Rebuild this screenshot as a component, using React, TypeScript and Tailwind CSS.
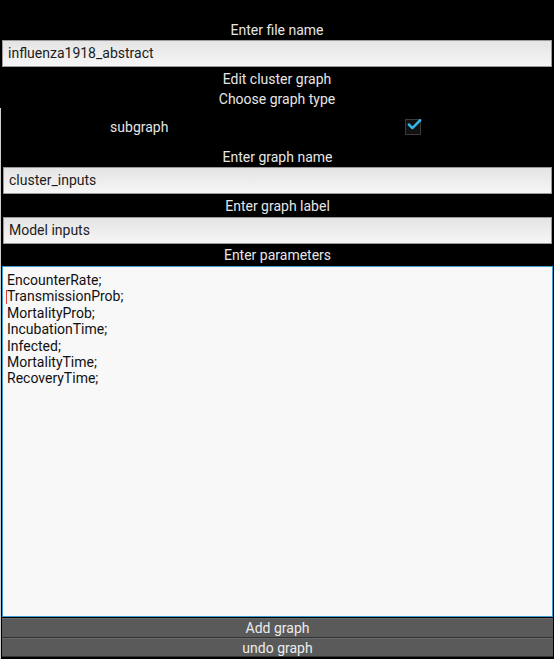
import { Check } from "lucide-react";

function Label({ text, h = "h-[20px]" }: { text: string; h?: string }) {
  return (
    <div className={`${h} flex items-center justify-center text-[14px] text-[#e6e6e6] leading-none`}>
      {text}
    </div>
  );
}

function Field({ value }: { value: string }) {
  return (
    <div className="mx-[2px] h-[27px] flex items-center px-[5px] border border-[#9a9a9a] bg-gradient-to-b from-[#e4e4e4] to-[#f6f6f6] text-[14px] text-[#1c1c1c]">
      {value}
    </div>
  );
}

const params = [
  "EncounterRate;",
  "TransmissionProb;",
  "MortalityProb;",
  "IncubationTime;",
  "Infected;",
  "MortalityTime;",
  "RecoveryTime;",
];

export default function App() {
  return (
    <div
      className="w-[554px] h-[659px] bg-black flex flex-col overflow-hidden"
      style={{ fontFamily: "Roboto, 'Liberation Sans', sans-serif" }}
    >
      <div className="h-[20px]" />
      <Label text="Enter file name" />
      <Field value="influenza1918_abstract" />
      <div className="flex-1 flex flex-col">
        <div className="h-[2px]" />
        <Label text="Edit cluster graph" />
        <Label text="Choose graph type" h="h-[19px]" />
        <div className="h-[38px] grid grid-cols-2 items-center border-l border-[#cfcfcf]">
          <div className="text-center text-[14px] text-[#e6e6e6]">subgraph</div>
          <div className="flex justify-center">
            <div className="w-[16px] h-[16px] border border-[#3a3a3a] bg-[#111] relative -ml-[5px]">
              <Check
                size={17}
                strokeWidth={3.5}
                className="absolute -top-[4px] left-[0px] text-[#33b5e5]"
              />
            </div>
          </div>
        </div>
        <div className="flex-1 flex flex-col border-l border-[#cfcfcf]">
          <Label text="Enter graph name" h="h-[21px]" />
          <Field value="cluster_inputs" />
          <Label text="Enter graph label" h="h-[23px]" />
          <Field value="Model inputs" />
          <Label text="Enter parameters" h="h-[22px]" />
          <div className="mx-[1px] h-[351px] border border-[#3c9fd0] bg-[#f8f8f8] px-[4px] pt-[5px] text-[14px] leading-[16.4px] text-[#111] relative">
            {params.map((p, i) => (
              <div key={p} className="relative">
                {i === 1 && (
                  <span className="absolute left-[-1px] top-[2px] h-[14px] w-[1px] bg-[#e04040]" />
                )}
                {p}
              </div>
            ))}
          </div>
          <div className="h-[1px]" />
          <button className="mx-[1px] h-[20px] bg-[#5a5a5a] border-t border-[#6a6a6a] border-b border-b-[#333] text-[14px] text-[#ececec] leading-none flex items-center justify-center">
            Add graph
          </button>
          <button className="mx-[1px] h-[19px] bg-[#5a5a5a] border-t border-[#6a6a6a] border-b border-b-[#333] text-[14px] text-[#ececec] leading-none flex items-center justify-center">
            undo graph
          </button>
        </div>
      </div>
    </div>
  );
}
